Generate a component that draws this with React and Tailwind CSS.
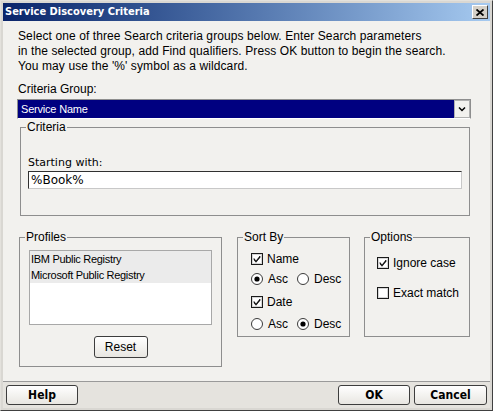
import React from "react";

const sans = { fontFamily: '"Liberation Sans", Arial, sans-serif' };

function Check({ checked }) {
  return (
    <svg width="12" height="12" viewBox="0 0 12 12" className="shrink-0">
      <rect x="0.5" y="0.5" width="11" height="11" fill="#fff" stroke="#1a1a1a" />
      <rect x="1.5" y="1.5" width="9" height="9" fill="none" stroke="#d6d6d6" />
      {checked && <path d="M3 5.5 L5 8 L9 3 L9 4.5 L5 9.3 L3 7 Z" fill="#000" stroke="#000" strokeWidth="0.6" />}
    </svg>
  );
}

function Radio({ checked }) {
  return (
    <svg width="12" height="12" viewBox="0 0 12 12" className="shrink-0">
      <circle cx="6" cy="6" r="5.5" fill="#fff" stroke="#3a3a3a" />
      {checked && <circle cx="6" cy="6" r="2.6" fill="#000" />}
    </svg>
  );
}

function Group({ title, className, children }) {
  return (
    <fieldset className={"border border-[#8e8e8e] " + className}>
      <legend className="ml-[5px] px-[1px] text-[12px] leading-[15px]">{title}</legend>
      {children}
    </fieldset>
  );
}

function PushButton({ children, className }) {
  return (
    <button className={"flex items-center justify-center rounded-[3px] border border-[#3d3d3d] bg-gradient-to-b from-[#ffffff] to-[#e8e6e1] text-black " + className}>
      {children}
    </button>
  );
}

export default function App() {
  return (
    <div className="w-[493px] h-[411px] bg-[#f2f1ee] text-black" style={sans}>
      <div className="w-full h-full flex flex-col border border-t-[#e3e1dc] border-l-[#e3e1dc] border-r-[#404040] border-b-[#404040] bg-[#d9d7d2] p-[2px]">
        {/* title bar */}
        <div className="h-[18px] flex items-center justify-between bg-gradient-to-r from-[#0a246a] to-[#a6caf0] pl-[2px] pr-[2px]">
          <span className="text-white font-bold text-[11px] leading-[18px]" style={{ fontFamily: '"DejaVu Sans Condensed", "DejaVu Sans", sans-serif' }}>
            Service Discovery Criteria
          </span>
          <div className="w-[16px] h-[14px] bg-[#d4d0c8] border border-t-white border-l-white border-r-[#404040] border-b-[#404040] flex items-center justify-center">
            <svg width="8" height="7" viewBox="0 0 8 7">
              <path d="M0.5 0.5 L7.5 6.5 M7.5 0.5 L0.5 6.5" stroke="#000" strokeWidth="1.8" />
            </svg>
          </div>
        </div>

        {/* body */}
        <div className="flex-1 bg-[#f2f1ee] pl-[15px] pt-[8px] flex flex-col">
          <p className="text-[12px] leading-[15px] tracking-[0.1px]">
            Select one of three Search criteria groups below. Enter Search parameters
            <br />
            in the selected group, add Find qualifiers. Press OK button to begin the search.
            <br />
            You may use the '%' symbol as a wildcard.
          </p>
          <div className="mt-[8px] text-[12px] leading-[15px]">Criteria Group:</div>
          <div className="mt-[2px] -ml-[1px] w-[454px] h-[20px] flex border border-t-[#8e8e8e] border-l-[#8e8e8e] border-r-[#8e8e8e] border-b-white">
            <div className="flex-1 bg-[#000080] text-white text-[11px] leading-[18px] pl-[3px] tracking-[-0.2px]">Service Name</div>
            <div className="w-[16px] bg-[#f2f1ee] border border-[#b0b0b0] flex items-center justify-center">
              <svg width="8" height="5" viewBox="0 0 8 5">
                <path d="M1 0.5 L4 3.5 L7 0.5" stroke="#000" strokeWidth="1.5" fill="none" />
              </svg>
            </div>
          </div>

          <Group title="Criteria" className="mt-[1px] ml-[2px] w-[450px]">
            <div className="px-[7px] pt-[20px] pb-[26px]">
              <div className="text-[11px] leading-[15px]" style={{ fontFamily: '"DejaVu Sans", sans-serif' }}>Starting with:</div>
              <div className="mt-[1px] h-[18px] bg-white border border-t-[#303030] border-l-[#303030] border-r-[#c8c8c8] border-b-[#c8c8c8] text-[12px] leading-[16px] pl-[2px]" style={{ fontFamily: '"DejaVu Sans", sans-serif' }}>
                %Book%
              </div>
            </div>
          </Group>

          <div className="mt-[14px] flex items-start">
            <Group title="Profiles" className="ml-[1px] w-[203px] h-[137px]">
              <div className="flex flex-col items-center">
                <div className="mt-[5px] w-[183px] h-[75px] bg-white border border-[#a8a8a8] text-[11px] leading-[16px] tracking-[-0.3px]">
                  <div className="bg-[#ebebeb] pl-[1px]">IBM Public Registry</div>
                  <div className="bg-[#ebebeb] pl-[1px]">Microsoft Public Registry</div>
                </div>
                <PushButton className="mt-[11px] w-[54px] h-[22px] text-[12px]">Reset</PushButton>
              </div>
            </Group>

            <Group title="Sort By" className="ml-[15px] w-[113px] h-[107px] text-[12px]">
              <div className="pl-[13px]">
                <div className="mt-[7px] flex items-center gap-[4px] h-[14px]"><Check checked />Name</div>
                <div className="mt-[6px] flex items-center h-[14px]">
                  <span className="flex items-center gap-[5px]"><Radio checked />Asc</span>
                  <span className="flex items-center gap-[5px] ml-[9px]"><Radio />Desc</span>
                </div>
                <div className="mt-[9px] flex items-center gap-[4px] h-[14px]"><Check checked />Date</div>
                <div className="mt-[8px] flex items-center h-[14px]">
                  <span className="flex items-center gap-[5px]"><Radio />Asc</span>
                  <span className="flex items-center gap-[5px] ml-[9px]"><Radio checked />Desc</span>
                </div>
              </div>
            </Group>

            <Group title="Options" className="ml-[14px] w-[106px] h-[107px] text-[12px]">
              <div className="pl-[12px]">
                <div className="mt-[11px] flex items-center gap-[4px] h-[14px]"><Check checked />Ignore case</div>
                <div className="mt-[16px] flex items-center gap-[4px] h-[14px]"><Check />Exact match</div>
              </div>
            </Group>
          </div>
        </div>

        {/* button bar */}
        <div className="h-[27px] bg-[#e5e3de] border-t border-t-[#9a9a9a] flex items-start pt-[3px] px-[3px] font-bold text-[12px]" style={{ fontFamily: '"DejaVu Sans Condensed", "DejaVu Sans", sans-serif' }}>
          <PushButton className="w-[72px] h-[20px]">Help</PushButton>
          <div className="flex-1" />
          <PushButton className="w-[72px] h-[20px]">OK</PushButton>
          <PushButton className="ml-[4px] w-[73px] h-[20px]">Cancel</PushButton>
        </div>
      </div>
    </div>
  );
}
